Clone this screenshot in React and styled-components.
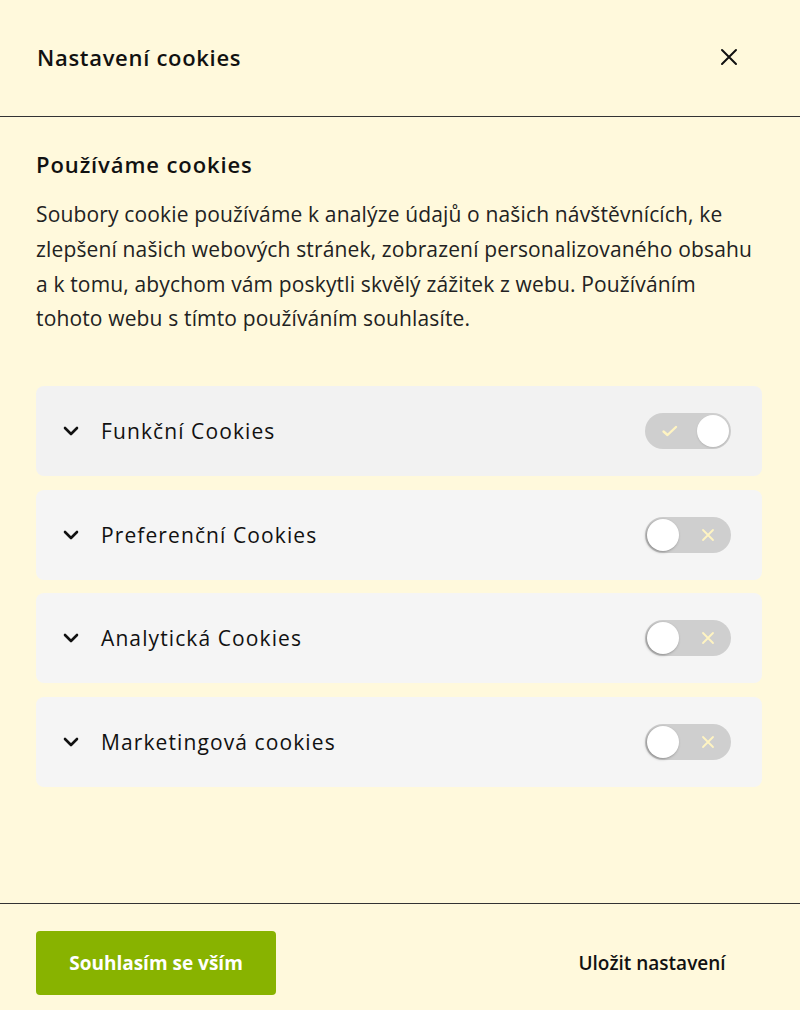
import React, { useState } from 'react';
import styled, { createGlobalStyle } from 'styled-components';

const GlobalStyle = createGlobalStyle`
  html, body {
    margin: 0;
    padding: 0;
    background: #fff9dc;
  }
  body {
    font-family: "Open Sans", "Noto Sans", sans-serif;
    color: #1a1a1a;
  }
  * { box-sizing: border-box; }
`;

const Modal = styled.div`
  width: 800px;
  height: 1010px;
  background: #fff9dc;
  display: flex;
  flex-direction: column;
`;

const Header = styled.header`
  height: 117px;
  padding: 0 36px 3px 37px;
  display: flex;
  align-items: center;
  justify-content: space-between;
  border-bottom: 1px solid #333;
`;

const Title = styled.h1`
  margin: 0;
  font-size: 22px;
  font-weight: 600;
  letter-spacing: 0.7px;
  color: #111;
`;

const CloseButton = styled.button`
  border: 0;
  background: none;
  padding: 8px;
  margin-right: 18px;
  display: flex;
  cursor: pointer;
  color: #111;
`;

const Body = styled.main`
  flex: 1;
  padding: 32px 38px 0 36px;
`;

const Heading = styled.h2`
  margin: 0 0 18px;
  font-size: 22px;
  font-weight: 600;
  letter-spacing: 0.9px;
  color: #111;
`;

const Text = styled.p`
  margin: 0;
  font-size: 21px;
  line-height: 34.8px;
  letter-spacing: 0.15px;
  color: #222;
`;

// keep the same line breaks as the original layout
const TextLine = styled.span`
  display: block;
  white-space: nowrap;
`;

const List = styled.div`
  margin-top: 50px;
  display: flex;
  flex-direction: column;
  gap: 13.5px;
`;

const Item = styled.div`
  height: 90px;
  border-radius: 8px;
  background: ${(p) => (p.$first ? '#f2f2f2' : '#f5f5f5')};
  display: flex;
  align-items: center;
  padding: 0 31px 0 26px;
`;

const Chevron = styled.span`
  display: flex;
  width: 18px;
  margin-right: 21px;
`;

const ItemLabel = styled.span`
  flex: 1;
  font-size: 21px;
  font-weight: 500;
  letter-spacing: 1.1px;
  color: #111;
`;

const Track = styled.button`
  position: relative;
  width: 86px;
  height: 36px;
  border: 0;
  padding: 0;
  border-radius: 18px;
  background: #cfcfcf;
  cursor: pointer;
`;

const Thumb = styled.span`
  position: absolute;
  top: 2px;
  left: ${(p) => (p.$on ? '52px' : '2px')};
  width: 32px;
  height: 32px;
  border-radius: 50%;
  background: #fff;
  box-shadow: ${(p) => (p.$on ? '0 1px 2px rgba(0,0,0,0.12)' : '-1px 1px 3px rgba(0,0,0,0.35)')};
`;

const TrackIcon = styled.span`
  position: absolute;
  top: 0;
  bottom: 0;
  left: ${(p) => (p.$on ? '16px' : '56px')};
  display: flex;
  align-items: center;
`;

const Footer = styled.footer`
  height: 107px;
  border-top: 1px solid #333;
  padding: 27px 23px 0 36px;
  display: flex;
  align-items: flex-start;
`;

const AcceptButton = styled.button`
  width: 240px;
  height: 64px;
  border: 0;
  border-radius: 4px;
  background: #88b300;
  color: #fff;
  font-family: inherit;
  font-size: 19px;
  font-weight: 700;
  cursor: pointer;
`;

const SaveButton = styled.button`
  margin-left: auto;
  width: 250px;
  height: 64px;
  border: 0;
  background: none;
  color: #111;
  font-family: inherit;
  font-size: 19px;
  font-weight: 600;
  cursor: pointer;
`;

const intro = [
  'Soubory cookie používáme k analýze údajů o našich návštěvnících, ke',
  'zlepšení našich webových stránek, zobrazení personalizovaného obsahu',
  'a k tomu, abychom vám poskytli skvělý zážitek z webu. Používáním',
  'tohoto webu s tímto používáním souhlasíte.',
];

const categories = [
  { label: 'Funkční Cookies', on: true },
  { label: 'Preferenční Cookies', on: false },
  { label: 'Analytická Cookies', on: false },
  { label: 'Marketingová cookies', on: false },
];

const Toggle = ({ on, onClick }) => (
  <Track onClick={onClick} aria-pressed={on}>
    <TrackIcon $on={on}>
      {on ? (
        <svg width="18" height="14" viewBox="0 0 18 14" fill="none">
          <path d="M2.5 7.5 L6.5 11 L15 3" stroke="#fff4c2" strokeWidth="2.4" strokeLinecap="round" strokeLinejoin="round" />
        </svg>
      ) : (
        <svg width="14" height="14" viewBox="0 0 14 14" fill="none">
          <path d="M2 2 L12 12 M12 2 L2 12" stroke="#fff4c2" strokeWidth="1.8" strokeLinecap="round" />
        </svg>
      )}
    </TrackIcon>
    <Thumb $on={on} />
  </Track>
);

const App = () => {
  const [state, setState] = useState(categories.map((c) => c.on));

  return (
    <Modal>
      <GlobalStyle />
      <Header>
        <Title>Nastavení cookies</Title>
        <CloseButton aria-label="Zavřít">
          <svg width="18" height="18" viewBox="0 0 18 18" fill="none">
            <path d="M2 2 L16 16 M16 2 L2 16" stroke="#111" strokeWidth="2" strokeLinecap="round" />
          </svg>
        </CloseButton>
      </Header>
      <Body>
        <Heading>Používáme cookies</Heading>
        <Text>
          {intro.map((line) => (
            <TextLine key={line}>{line}</TextLine>
          ))}
        </Text>
        <List>
          {categories.map((c, i) => (
            <Item key={c.label} $first={i === 0}>
              <Chevron>
                <svg width="18" height="12" viewBox="0 0 18 12" fill="none">
                  <path d="M3 3 L9 9 L15 3" stroke="#111" strokeWidth="2.6" strokeLinecap="round" strokeLinejoin="round" />
                </svg>
              </Chevron>
              <ItemLabel>{c.label}</ItemLabel>
              <Toggle
                on={state[i]}
                onClick={() => setState((s) => s.map((v, j) => (j === i ? !v : v)))}
              />
            </Item>
          ))}
        </List>
      </Body>
      <Footer>
        <AcceptButton>Souhlasím se vším</AcceptButton>
        <SaveButton>Uložit nastavení</SaveButton>
      </Footer>
    </Modal>
  );
};

export default App;
